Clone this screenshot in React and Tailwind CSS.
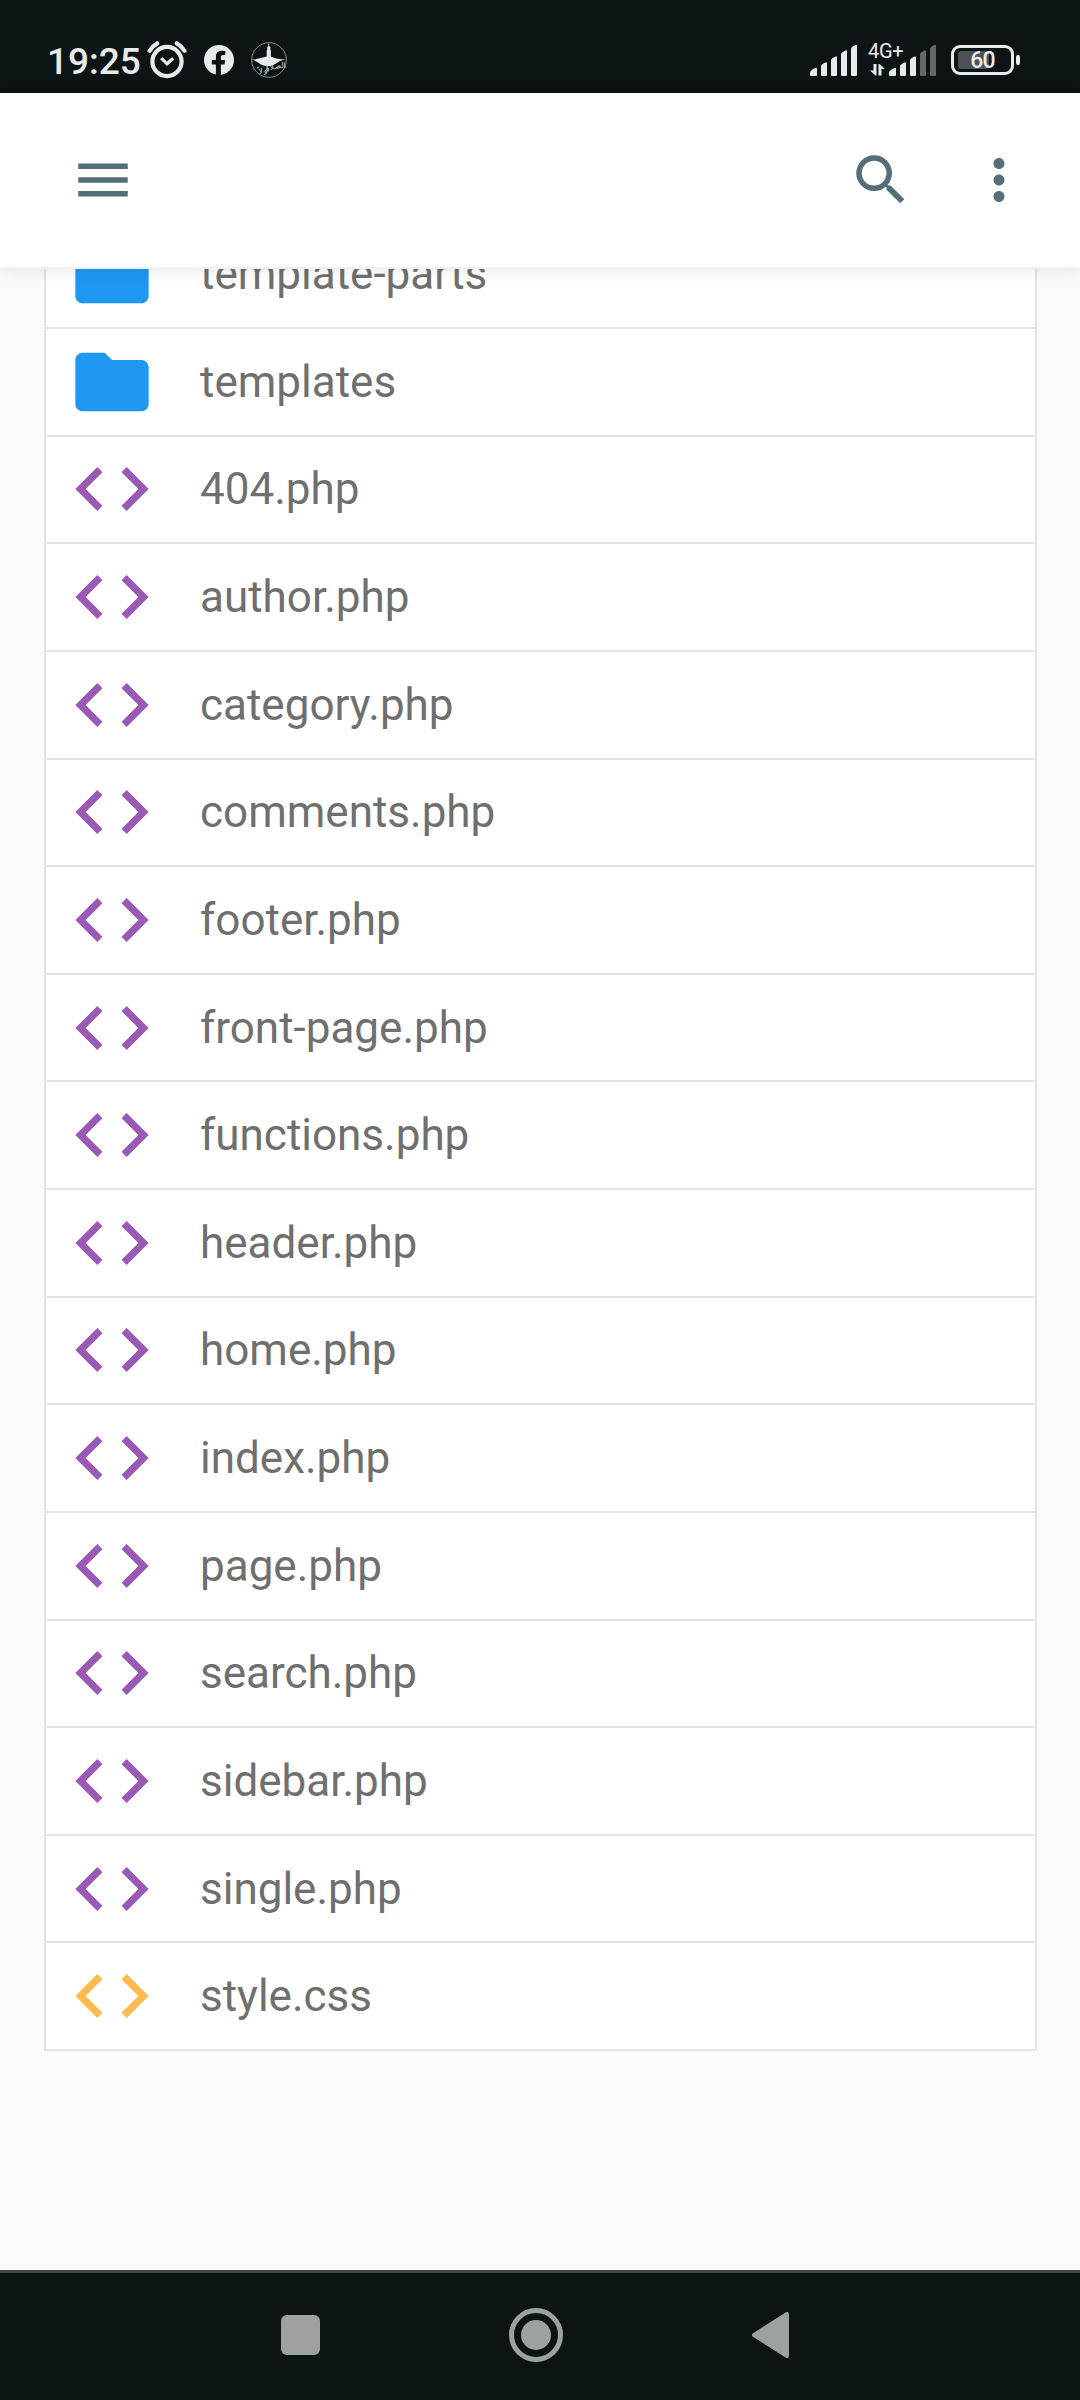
import { MdCode, MdFolder, MdMenu, MdMoreVert, MdSearch } from 'react-icons/md';

const entries = [
  { name: 'templates', type: 'folder' },
  { name: '404.php', type: 'php' },
  { name: 'author.php', type: 'php' },
  { name: 'category.php', type: 'php' },
  { name: 'comments.php', type: 'php' },
  { name: 'footer.php', type: 'php' },
  { name: 'front-page.php', type: 'php' },
  { name: 'functions.php', type: 'php' },
  { name: 'header.php', type: 'php' },
  { name: 'home.php', type: 'php' },
  { name: 'index.php', type: 'php' },
  { name: 'page.php', type: 'php' },
  { name: 'search.php', type: 'php' },
  { name: 'sidebar.php', type: 'php' },
  { name: 'single.php', type: 'php' },
  { name: 'style.css', type: 'css' }
];

const icons = {
  folder: { Icon: MdFolder, color: 'text-[#1f98f4]' },
  php: { Icon: MdCode, color: 'text-[#9b59b6]' },
  css: { Icon: MdCode, color: 'text-[#ffbb4d]' }
};

function AlarmIcon() {
  return (
    <svg className="w-10 h-10" viewBox="0 0 40 40" fill="none" stroke="currentColor">
      <circle cx="20" cy="21.500" r="14.600" strokeWidth="4.200" />
      <path d="M2.600 10.800q2.800-4.800 7.600-7.500M37.400 10.800q-2.800-4.800-7.600-7.500" strokeWidth="4.200" strokeLinecap="round" />
      <path d="M14.200 18.200l5.800 5.600 6.200-5.600" strokeWidth="3.200" />
    </svg>
  );
}

function FacebookIcon() {
  return (
    <svg className="w-[30px] h-[30px]" viewBox="0 0 30 30">
      <circle cx="15" cy="15" r="15" fill="currentColor" />
      <path
        d="M11.900 30V19.500H7.800v-4.600h4.100v-3.200c0-3.800 2.200-6 5.800-6 1.800 0 3.600.3 3.600.3v4h-2.100c-1.800 0-2.300 1-2.300 2.200v2.700h4.300l-.7 4.600h-3.600V30z"
        fill="#0c1415"
      />
    </svg>
  );
}

function MosqueIcon() {
  return (
    <svg className="w-9 h-9 overflow-visible" viewBox="0 0 36 36" fill="currentColor">
      <circle cx="18" cy="18" r="17.300" fill="none" stroke="currentColor" strokeWidth="0.8" opacity="0.7" />
      <path d="M17.400 1.500h.8v2.500l1.200 1v3l.5.600v6l4.600 1.600q5 1.500 10.200 1.400c-3 .8-5 1-7.500 2.400-3 2-5 3.500-8.500 4-6 .6-8.500-1-11.200-3.200Q4.500 18.500.8 17.800q4.500-.4 7.500-1.600 3.500-.6 7.400-1.600v-6l.5-.6V5l1.200-1z" />
      <g fontSize="7.500" textAnchor="middle" opacity="0.9">
        <text x="25" y="27" transform="rotate(-10 25 27)">الصلاة</text>
        <text x="13" y="31" transform="rotate(-10 13 31)">أولاً</text>
      </g>
    </svg>
  );
}

function Signal({ dim = 0 }) {
  const bars = [
    'M0 30v-2.500q1-3 5.500-4.500h1.500v7q0 1-1 1h-5q-1 0-1-1z',
    'M11 30v-9q0-1.500 4.500-3.500h1.500v12.500q0 1-1 1h-4q-1 0-1-1z',
    'M21 30v-15q0-1.500 4.500-3.500h1.500v18.500q0 1-1 1h-4q-1 0-1-1z',
    'M31 30v-21q0-1.500 4.500-3.500h1.500v24.500q0 1-1 1h-4q-1 0-1-1z',
    'M41 30v-26.500q0-1.500 4.500-3.500h1.500v30q0 1-1 1h-4q-1 0-1-1z'
  ];

  return (
    <svg className="w-12 h-[31px]" viewBox="0 0 48 31" fill="currentColor">
      {bars.map((d, i) => (
        <path key={i} d={d} opacity={i >= bars.length - dim ? 0.4 : 1} />
      ))}
    </svg>
  );
}

function StatusBar() {
  return (
    <div className="h-[93px] shrink-0 bg-[#0c1415] text-[#e9ebeb] flex items-start pl-[47px] pr-[60px]">
      <span className="mt-10 w-[94px] text-[37px] leading-[43px] font-medium whitespace-nowrap">19:25</span>
      <div className="mt-10 ml-1.5">
        <AlarmIcon />
      </div>
      <div className="mt-[45px] ml-[17px]">
        <FacebookIcon />
      </div>
      <div className="mt-[42px] ml-[17px]">
        <MosqueIcon />
      </div>

      <div className="ml-auto mt-[45px]">
        <Signal />
      </div>
      <div className="relative mt-[45px] ml-[31px]">
        <span className="absolute -left-[21px] -top-[6px] text-[20px] leading-6 tracking-[-0.3px]">4G+</span>
        <svg className="absolute -left-[19px] top-[19px] w-[15px] h-3" viewBox="0 0 15 12" fill="currentColor">
          <path d="M3.500 0h3v11.500H5.500L0 6.500h3.500zM8.500 0h1L15 5h-3.500v6.500h-3z" />
        </svg>
        <Signal dim={2} />
      </div>
      <div className="mt-[45px] ml-[14px] flex items-center">
        <div className="relative w-[63px] h-[30px] rounded-[9px] border-3 border-current flex items-center justify-center">
          <div className="absolute left-1 top-[3px] w-[31px] h-[18px] rounded-[3px] bg-[#4c5254]" />
          <span className="relative top-px text-[23px] leading-6 font-medium tracking-[-0.8px]">60</span>
        </div>
        <div className="ml-[2px] w-1 h-2.5 rounded-full bg-current" />
      </div>
    </div>
  );
}

function AppBar() {
  return (
    <div className="relative z-10 h-[176px] shrink-0 bg-white border-b-2 border-[#f0f0f0] shadow-[0_2px_14px_rgba(0,0,0,0.09)] text-[#546e7a] flex items-center pl-[70px] pr-12">
      <MdMenu className="w-[66px] h-[66px]" />
      <MdSearch className="w-[66px] h-[66px] ml-auto" />
      <MdMoreVert className="w-[66px] h-[66px] ml-[52px]" />
    </div>
  );
}

function FileRow({ name, type }) {
  const { Icon, color } = icons[type];

  return (
    <div className="h-[107.625px] border-b-2 border-[#e4e4e4] flex items-center pl-[22px]">
      <Icon className={`w-[88px] h-[88px] shrink-0 ${color}`} />
      <span className="ml-11 text-[44px] leading-[66px] text-[#6f6f6f]">{name}</span>
    </div>
  );
}

function NavBar() {
  return (
    <div className="h-[130px] shrink-0 bg-[#0c1415] border-t-3 border-[#3f4748] text-[#9da1a2] flex items-center pl-[281px] pr-[291px] pb-[3px] justify-between">
      <div className="w-[39px] h-10 rounded-md bg-current" />
      <svg className="w-[54px] h-[54px]" viewBox="0 0 54 54">
        <circle cx="27" cy="27" r="24.500" fill="none" stroke="currentColor" strokeWidth="5" />
        <circle cx="27" cy="27" r="15" fill="currentColor" />
      </svg>
      <svg className="w-[37px] h-[46px]" viewBox="0 0 37 46" fill="currentColor" stroke="currentColor" strokeWidth="4" strokeLinejoin="round">
        <path d="M35 2v42L2 23z" />
      </svg>
    </div>
  );
}

export default function App() {
  return (
    <div className="w-[1080px] h-[2400px] overflow-hidden flex flex-col bg-[#fafafa] font-['Roboto',sans-serif]">
      <StatusBar />
      <AppBar />

      {/* list is scrolled, so the first row sits half under the app bar */}
      <div className="flex-1 min-h-0 overflow-hidden pl-[44px] pr-[43px]">
        <div className="-mt-[47.6px] bg-white border-x-2 border-[#e4e4e4]">
          <FileRow name="template-parts" type="folder" />
          {entries.map((entry) => (
            <FileRow key={entry.name} {...entry} />
          ))}
        </div>
      </div>

      <NavBar />
    </div>
  );
}
